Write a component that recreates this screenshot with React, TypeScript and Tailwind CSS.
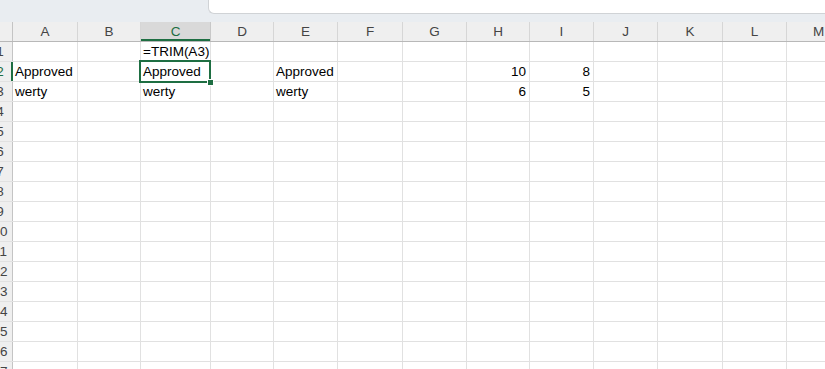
import React from 'react';

const cols = [
  { key: 'A', w: 'w-[65px]' },
  { key: 'B', w: 'w-[63px]' },
  { key: 'C', w: 'w-[70px]' },
  { key: 'D', w: 'w-[63px]' },
  { key: 'E', w: 'w-[64px]' },
  { key: 'F', w: 'w-[65px]' },
  { key: 'G', w: 'w-[64px]' },
  { key: 'H', w: 'w-[63px]' },
  { key: 'I', w: 'w-[64px]' },
  { key: 'J', w: 'w-[64px]' },
  { key: 'K', w: 'w-[65px]' },
  { key: 'L', w: 'w-[64px]' },
  { key: 'M', w: 'w-[64px]' },
];

type Cell = { v: string; num?: boolean };

// sheet contents, keyed by "row:col"
const data: Record<string, Cell> = {
  '1:C': { v: '=TRIM(A3)' },
  '2:A': { v: 'Approved' },
  '2:C': { v: 'Approved' },
  '2:E': { v: 'Approved' },
  '2:H': { v: '10', num: true },
  '2:I': { v: '8', num: true },
  '3:A': { v: 'werty' },
  '3:C': { v: 'werty' },
  '3:E': { v: 'werty' },
  '3:H': { v: '6', num: true },
  '3:I': { v: '5', num: true },
};

const rows = Array.from({ length: 17 }, (_, i) => i + 1);
const font = { fontFamily: '"Liberation Sans", Arial, sans-serif' };

export default function App() {
  return (
    <div className="w-[825px] h-[369px] overflow-hidden bg-white" style={font}>
      {/* Formula bar strip */}
      <div className="h-[22px] flex bg-[#e9edf1]">
        <div className="w-[208px] shrink-0" />
        <div className="flex-1 h-[14px] bg-white border-l border-b border-[#d0d3d6] rounded-bl-[6px]" />
      </div>

      {/* Column headers */}
      <div className="flex h-[20px] bg-[#efefef] border-b border-[#b8b8b8]">
        <div className="w-[13px] shrink-0 border-r border-[#c4c4c4]" />
        {cols.map((c) => (
          <div
            key={c.key}
            className={`${c.w} shrink-0 flex items-center justify-center pt-[1px] text-[13.5px] border-r ${
              c.key === 'C'
                ? 'bg-[#d9d9d9] text-[#1e6e42] border-[#c8c8c8] shadow-[inset_0_-2px_0_#1e6e42]'
                : 'text-[#444] border-[#d6d6d6]'
            }`}
          >
            {c.key}
          </div>
        ))}
      </div>

      {/* Grid */}
      {rows.map((r) => (
        <div key={r} className="flex h-[20px] border-b border-[#e1e1e1]">
          <div
            className={`w-[13px] shrink-0 overflow-hidden bg-[#efefef] flex items-center pt-[2px] ${
              r === 2 ? 'shadow-[inset_-2px_0_0_#1e6e42]' : 'border-r border-[#c4c4c4]'
            }`}
          >
            <div className={`w-[26px] ml-[-13px] shrink-0 text-center text-[13.5px] ${r === 2 ? 'text-[#1e6e42]' : 'text-[#444]'}`}>
              {r}
            </div>
          </div>
          {cols.map((c) => {
            const cell = data[`${r}:${c.key}`];
            const selected = r === 2 && c.key === 'C';
            return (
              <div
                key={c.key}
                className={`${c.w} shrink-0 relative flex items-center pt-[2px] border-r border-[#e1e1e1] text-[13.5px] text-black whitespace-nowrap ${
                  cell?.num ? 'justify-end pr-[3px]' : 'pl-[2px]'
                }`}
              >
                {cell?.v}
                {selected && (
                  <div className="absolute z-10 left-[-2px] top-[-2px] right-[-1px] bottom-[-2px] border-2 border-[#1e6e42]">
                    <div className="absolute right-[-5px] bottom-[-5px] w-[7px] h-[7px] bg-[#1e6e42] border border-white" />
                  </div>
                )}
              </div>
            );
          })}
        </div>
      ))}
    </div>
  );
}
